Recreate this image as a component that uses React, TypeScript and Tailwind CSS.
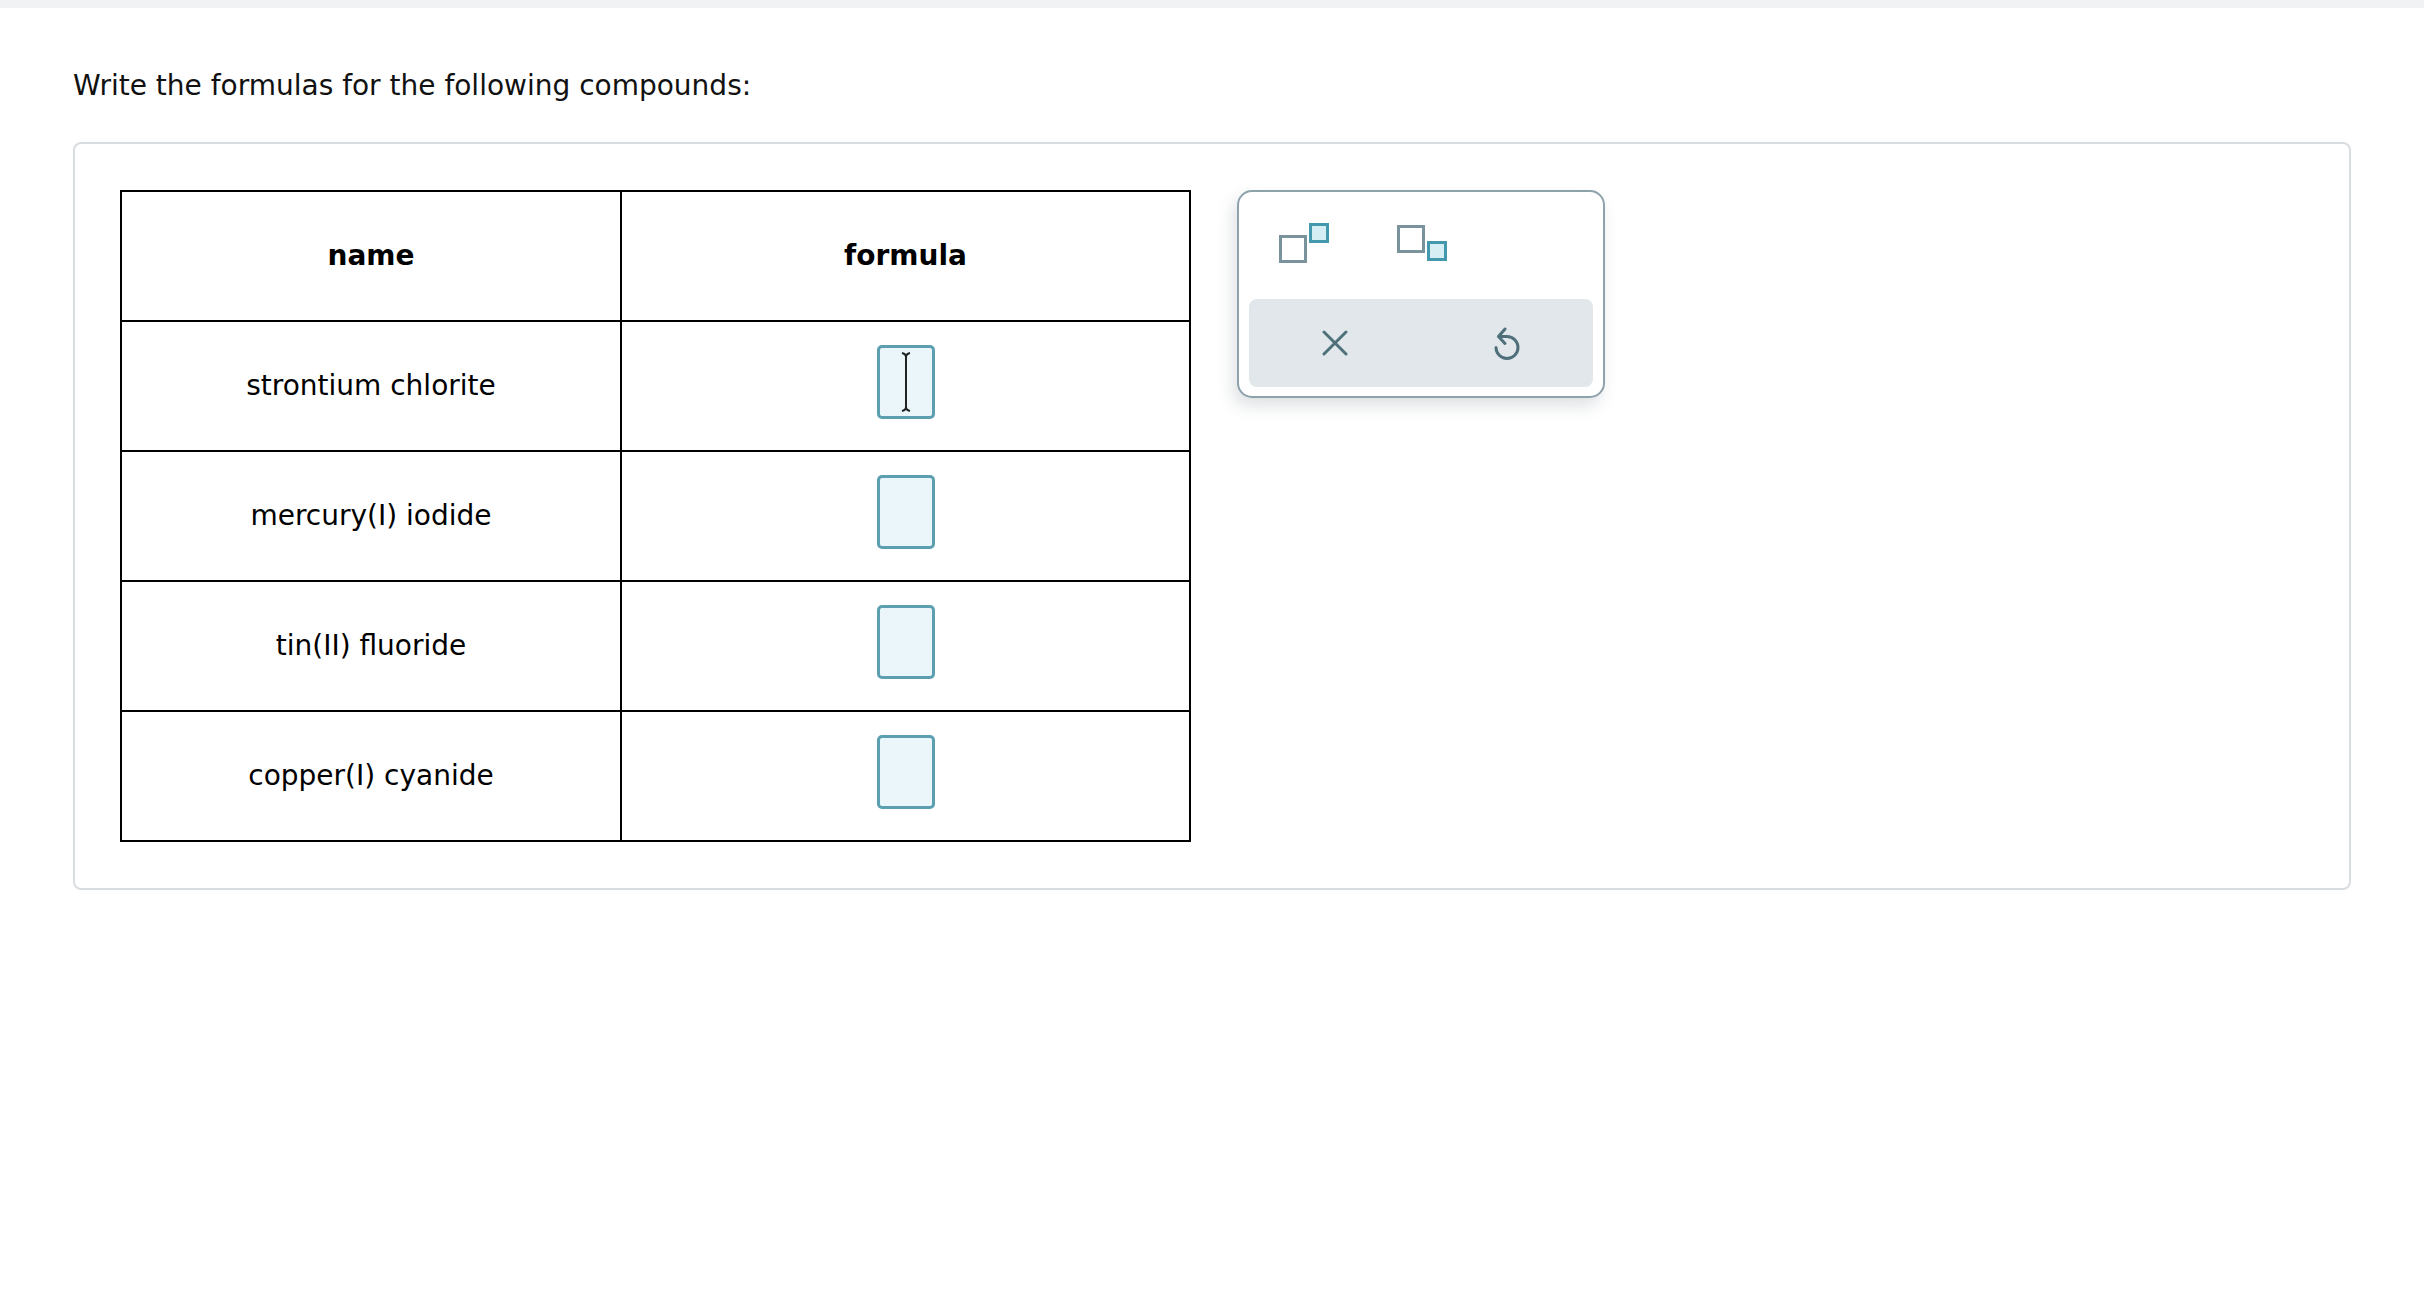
import React from 'react'

const rows = ['strontium chlorite', 'mercury(I) iodide', 'tin(II) fluoride', 'copper(I) cyanide']

function SuperscriptIcon() {
  return (
    <svg width="50" height="40" viewBox="0 0 50 40" className="block">
      <rect x="1.5" y="13.5" width="25" height="25" fill="#fff" stroke="#7a929b" strokeWidth="3" />
      <rect x="31.5" y="1.5" width="17" height="17" fill="#d5eef3" stroke="#4398ae" strokeWidth="3" />
    </svg>
  )
}

function SubscriptIcon() {
  return (
    <svg width="50" height="37" viewBox="0 0 50 37" className="block">
      <rect x="1.5" y="1.5" width="25" height="25" fill="#fff" stroke="#7a929b" strokeWidth="3" />
      <rect x="31.5" y="17.5" width="17" height="17" fill="#d5eef3" stroke="#4398ae" strokeWidth="3" />
    </svg>
  )
}

function CloseIcon() {
  return (
    <svg width="26" height="26" viewBox="0 0 26 26" className="block">
      <path d="M2 2 L24 24 M24 2 L2 24" stroke="#4f6f7b" strokeWidth="3" strokeLinecap="round" fill="none" />
    </svg>
  )
}

function UndoIcon() {
  return (
    <svg width="28" height="36" viewBox="0 0 28 36" className="block">
      <path d="M12 3 L5.5 10.5 L12 17.5" stroke="#4f6f7b" strokeWidth="3" strokeLinecap="round" strokeLinejoin="round" fill="none" />
      <path d="M6 10.5 H14 A11 11 0 1 1 3 21.5" stroke="#4f6f7b" strokeWidth="3" strokeLinecap="round" fill="none" />
    </svg>
  )
}

function Cursor() {
  return (
    <svg width="14" height="60" viewBox="0 0 14 60" className="block">
      <path d="M3 1 Q7 2 7 5 Q7 2 11 1 M7 5 V55 M3 59 Q7 58 7 55 Q7 58 11 59" stroke="#222" strokeWidth="2" fill="none" />
    </svg>
  )
}

function AnswerBox({ active }: { active?: boolean }) {
  return (
    <div className="w-[58px] h-[74px] rounded-[5px] border-[3px] border-[#5c9fb0] bg-[#ebf6fa] flex items-center justify-center mx-auto">
      {active && <Cursor />}
    </div>
  )
}

export default function App() {
  return (
    <div className="min-h-[1310px] bg-white text-black" style={{ fontFamily: '"DejaVu Sans", Verdana, sans-serif' }}>
      <div className="h-[8px] bg-[#f1f2f4]" />
      <div className="pl-[73px] pr-[73px]">
        <p className="mt-[59px] text-[28px] leading-[38px] text-[#111]">Write the formulas for the following compounds:</p>

        <div className="mt-[37px] w-[2278px] border-2 border-[#d8dde0] rounded-[8px] pl-[45px] pt-[46px] pb-[46px]">
          <div className="flex items-start gap-[46px]">
            <table className="border-collapse">
              <thead>
                <tr>
                  <th className="w-[500px] h-[130px] border-2 border-black text-[28px] font-bold text-center align-middle">name</th>
                  <th className="w-[569px] h-[130px] border-2 border-black text-[28px] font-bold text-center align-middle">formula</th>
                </tr>
              </thead>
              <tbody>
                {rows.map((name, i) => (
                  <tr key={name}>
                    <td className="h-[130px] border-2 border-black text-[28px] text-center align-middle">{name}</td>
                    <td className="h-[130px] border-2 border-black align-middle">
                      <div className="-mt-[8px]">
                        <AnswerBox active={i === 0} />
                      </div>
                    </td>
                  </tr>
                ))}
              </tbody>
            </table>

            <div className="w-[368px] h-[208px] border-2 border-[#8ea2ac] rounded-[15px] bg-white shadow-[-4px_8px_16px_rgba(70,90,100,0.18)] px-[10px] pb-[9px] flex flex-col">
              <div className="h-[107px] pt-[31px] pl-[30px] flex items-start gap-[68px]">
                <SuperscriptIcon />
                <div className="mt-[2px]">
                  <SubscriptIcon />
                </div>
              </div>
              <div className="flex-1 rounded-[8px] bg-[#e1e7ea] grid grid-cols-2">
                <div className="flex items-center justify-center">
                  <button type="button" className="p-0">
                    <CloseIcon />
                  </button>
                </div>
                <div className="flex items-center justify-center">
                  <button type="button" className="p-0 mt-[2px]">
                    <UndoIcon />
                  </button>
                </div>
              </div>
            </div>
          </div>
        </div>
      </div>
    </div>
  )
}
